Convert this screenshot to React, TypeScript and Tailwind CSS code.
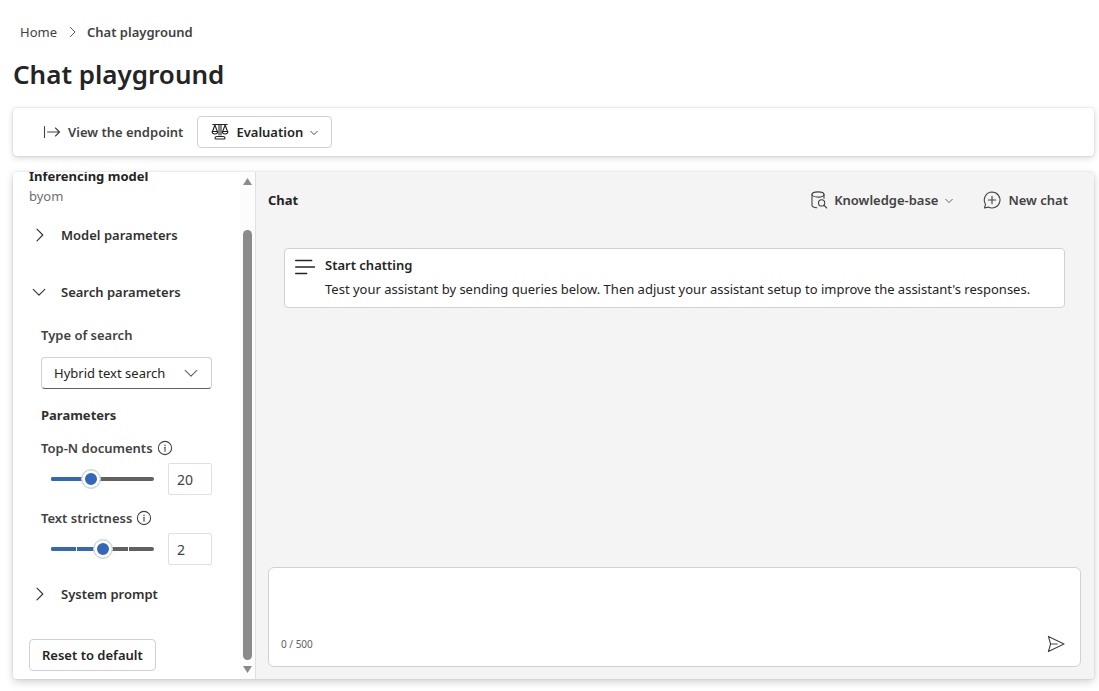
import React, { useState } from 'react';

type IconProps = { className?: string };

const svgProps = {
  viewBox: '0 0 20 20',
  fill: 'none',
  stroke: 'currentColor',
  strokeWidth: 1.1,
  strokeLinecap: 'round' as const,
  strokeLinejoin: 'round' as const,
  'aria-hidden': true,
};

const ChevronRight = ({ className = 'size-5' }: IconProps) => (
  <svg {...svgProps} className={className}>
    <path d="M8 4.2 13.8 10 8 15.8" />
  </svg>
);

const ChevronDown = ({ className = 'size-5' }: IconProps) => (
  <svg {...svgProps} className={className}>
    <path d="M4.2 7.4 10 13.2l5.8-5.8" />
  </svg>
);

const SmallChevronDown = () => (
  <svg {...svgProps} viewBox="0 0 10 10" strokeWidth="0.8" className="size-2.5">
    <path d="M1.7 4.3 5 7.6l3.3-3.3" />
  </svg>
);

const EndpointIcon = () => (
  <svg {...svgProps} className="size-5">
    <path d="M2.5 4.5v11M5.5 10h12M13.5 6l4 4-4 4" />
  </svg>
);

const ScaleIcon = () => (
  <svg {...svgProps} className="size-5" strokeWidth="1.1">
    <path d="M2.8 2.5h14.4M9 2.5V13M11 2.5V13M4.9 3 2.6 9.3M4.9 3l2.3 6.3M15.1 3l-2.3 6.3M15.1 3l2.3 6.3" />
    <path d="M2.1 9.5h5.6c0 1.5-1.2 2.5-2.8 2.5s-2.8-1-2.8-2.5ZM12.3 9.5h5.6c0 1.5-1.2 2.5-2.8 2.5s-2.8-1-2.8-2.5Z" />
    <path d="M7 14.5h6c1.2 0 2 .7 2 1.5s-.4 1-1 1H6c-.6 0-1-.2-1-1s.8-1.5 2-1.5Z" />
  </svg>
);

const DatabaseSearchIcon = () => (
  <svg {...svgProps} className="size-5">
    <ellipse cx="10" cy="4.5" rx="6" ry="2.6" />
    <path d="M4 4.5v10.8c0 1.3 2 2.3 4.8 2.4M16 4.5v3.7" />
    <circle cx="13.6" cy="12.9" r="3.1" />
    <path d="m15.9 15.2 2.8 2.8" />
  </svg>
);

const NewChatIcon = () => (
  <svg {...svgProps} className="size-5">
    <path d="M10 2a8 8 0 1 1-3.7 15.1l-3.7.9.9-3.8A8 8 0 0 1 10 2Z" />
    <path d="M10 6.3v7.4M6.3 10h7.4" />
  </svg>
);

const InfoIcon = () => (
  <svg {...svgProps} className="size-4">
    <circle cx="10" cy="10" r="8.3" strokeWidth="1.3" />
    <path d="M10 9v5" strokeWidth="1.4" />
    <circle cx="10" cy="6.5" r="0.9" fill="currentColor" stroke="none" />
  </svg>
);

const LinesIcon = () => (
  <svg {...svgProps} className="size-6 shrink-0" viewBox="0 0 24 24" strokeWidth="1.4">
    <path d="M2.7 5.5h16M2.7 12h18.8M2.7 18.5h11" />
  </svg>
);

const SendIcon = () => (
  <svg {...svgProps} className="size-5">
    <path d="M2.4 2.4 18 10 2.4 17.6 4.6 10 2.4 2.4ZM4.6 10h6.6" />
  </svg>
);

interface SectionButtonProps {
  label: string;
  open?: boolean;
  className?: string;
}

const SectionButton: React.FC<SectionButtonProps> = ({ label, open = false, className = '' }) => (
  <button type="button" aria-expanded={open} className={`flex h-11 w-full items-center gap-3 text-left font-semibold text-[#323130] ${className}`}>
    {open ? <ChevronDown /> : <ChevronRight />}
    {label}
  </button>
);

interface ParamSliderProps {
  id: string;
  label: string;
  min: number;
  max: number;
  initial: number;
  ticks?: boolean;
}

const ParamSlider: React.FC<ParamSliderProps> = ({ id, label, min, max, initial, ticks }) => {
  const [value, setValue] = useState(initial);
  const percent = ((value - min) / (max - min)) * 100;

  return (
    <div className="mt-[13px]">
      <div className="flex h-5 items-center gap-1 font-semibold text-[#424242]">
        <label htmlFor={id}>{label}</label>
        <InfoIcon />
      </div>
      <div className="mt-[5px] flex items-center gap-1">
        <div className="grid flex-1 items-center">
          <div className="col-start-1 row-start-1 mx-2.5 grid h-1 overflow-hidden rounded-full bg-[#616161]">
            <div className="col-start-1 row-start-1 h-1 bg-[#3267b9]" style={{ width: `${percent}%` }} />
            {ticks && (
              <div className="col-start-1 row-start-1 flex h-1 justify-around">
                <span className="w-px bg-white" />
                <span className="w-px bg-white" />
              </div>
            )}
          </div>
          <input
            id={id}
            type="range"
            min={min}
            max={max}
            value={value}
            onChange={(e) => setValue(Number(e.target.value))}
            className="z-10 col-start-1 row-start-1 m-0 h-5 w-full min-w-0 appearance-none bg-transparent [&::-webkit-slider-thumb]:size-5 [&::-webkit-slider-thumb]:appearance-none [&::-webkit-slider-thumb]:rounded-full [&::-webkit-slider-thumb]:border [&::-webkit-slider-thumb]:border-[#d1d1d1] [&::-webkit-slider-thumb]:bg-[#3267b9] [&::-webkit-slider-thumb]:bg-clip-padding [&::-webkit-slider-thumb]:shadow-[inset_0_0_0_3px_white]"
          />
        </div>
        <input
          type="text"
          aria-label={`${label} value`}
          value={value}
          onChange={(e) => setValue(Number(e.target.value) || min)}
          className="h-8 w-11 rounded-xs border border-[#e0e0e0] bg-white px-2 text-sm text-[#424242]"
        />
      </div>
    </div>
  );
};

const Sidebar = () => (
  <aside className="flex w-[243px] shrink-0 border-r border-[#e0e0e0] bg-white">
    <div className="flex-1 overflow-hidden pb-2 pl-4">
      <h2 className="-mt-1.5 font-bold text-[#242424]">Inferencing model</h2>
      <p className="text-[#707070]">byom</p>

      <SectionButton label="Model parameters" className="mt-[7px]" />
      <SectionButton label="Search parameters" open className="mt-[13px]" />

      <div className="mt-[11px] mr-7 ml-3">
        <label htmlFor="search-type" className="block font-semibold text-[#424242]">Type of search</label>
        <div className="mt-3 grid items-center">
          <select id="search-type" className="col-start-1 row-start-1 h-8 w-full appearance-none rounded border border-[#d1d1d1] border-b-[#616161] bg-white px-3 text-[#242424]">
            <option>Hybrid text search</option>
            <option>Text search</option>
            <option>Vector search</option>
          </select>
          <ChevronDown className="pointer-events-none col-start-1 row-start-1 mr-[11px] size-5 justify-self-end text-[#616161]" />
        </div>

        <h3 className="mt-4 font-bold text-[#323130]">Parameters</h3>
        <ParamSlider id="top-n" label="Top-N documents" min={1} max={50} initial={20} />
        <ParamSlider id="strictness" label="Text strictness" min={1} max={3} initial={2} ticks />
      </div>

      <SectionButton label="System prompt" className="mt-[7px]" />
      <button type="button" className="mt-[23px] block h-8 rounded border border-[#d1d1d1] bg-white px-3 font-semibold text-[#242424]">
        Reset to default
      </button>
    </div>

    {/* Scrollbar */}
    <div className="flex w-[15px] flex-col items-center bg-[#fcfcfc] py-1.5 text-[#8b8b8b]">
      <svg viewBox="0 0 9 7" className="h-[7px] w-[9px]" aria-hidden="true"><path d="M4.5 0 9 7H0Z" fill="currentColor" /></svg>
      <div className="mt-[45px] mb-1.5 w-[9px] flex-1 rounded-full bg-[#8b8b8b]" />
      <svg viewBox="0 0 9 7" className="h-[7px] w-[9px]" aria-hidden="true"><path d="M0 0h9L4.5 7Z" fill="currentColor" /></svg>
    </div>
  </aside>
);

const ChatPanel = () => {
  const [message, setMessage] = useState('');

  return (
    <section className="flex min-w-0 flex-1 flex-col bg-[#f4f4f4] py-3 pr-[13px] pl-3">
      <header className="flex h-8 items-center justify-between pr-[13px]">
        <h2 className="font-bold text-[#242424]">Chat</h2>
        <div className="flex items-center gap-7 font-semibold text-[#424242]">
          <button type="button" className="flex items-center gap-1.5">
            <DatabaseSearchIcon />
            <span>Knowledge-base</span>
            <SmallChevronDown />
          </button>
          <button type="button" className="flex items-center gap-1.5">
            <NewChatIcon />
            New chat
          </button>
        </div>
      </header>

      <div className="mx-4 mt-8 flex gap-2 rounded border border-[#d1d1d1] bg-white px-2 py-1.5 text-[#242424]">
        <LinesIcon />
        <div>
          <h3 className="font-semibold">Start chatting</h3>
          <p className="mt-1 pb-0.5">
            Test your assistant by sending queries below. Then adjust your assistant setup to improve the assistant's responses.
          </p>
        </div>
      </div>

      <form className="mt-auto rounded-md border border-[#d1d1d1] bg-white px-3 pt-2.5 pb-3" onSubmit={(e) => e.preventDefault()}>
        <textarea
          aria-label="Message"
          maxLength={500}
          value={message}
          onChange={(e) => setMessage(e.target.value)}
          className="block h-14 w-full resize-none bg-transparent outline-none"
        />
        <div className="flex items-center justify-between pr-0.5">
          <span className="text-[10px] text-[#616161]">{message.length} / 500</span>
          <button type="submit" aria-label="Send" className="text-[#424242]">
            <SendIcon />
          </button>
        </div>
      </form>
    </section>
  );
};

const App: React.FC = () => {
  return (
    <div className="flex min-h-screen flex-col bg-white pt-[22px] pr-[5px] pb-3 pl-[13px] font-['Noto_Sans','Open_Sans',sans-serif] text-[13px] leading-5 text-[#242424]">
      <nav aria-label="Breadcrumb" className="flex h-5 items-center gap-[7px] pl-[7px] text-[#424242]">
        <a href="#home">Home</a>
        <ChevronRight className="size-4" />
        <a href="#playground" aria-current="page" className="font-semibold">Chat playground</a>
      </nav>

      <h1 className="mt-3.5 text-[26px] leading-9 font-semibold">Chat playground</h1>

      <div className="mt-4 flex h-12 items-center gap-3.5 rounded bg-white pl-[29px] font-semibold shadow-[0_0_2px_rgba(0,0,0,0.16),0_2px_6px_rgba(0,0,0,0.16)]">
        <button type="button" className="flex items-center gap-1.5 text-[#424242]">
          <EndpointIcon />
          View the endpoint
        </button>
        <button type="button" className="flex h-8 items-center gap-1.5 rounded border border-[#d1d1d1] bg-white px-3">
          <ScaleIcon />
          <span>Evaluation</span>
          <SmallChevronDown />
        </button>
      </div>

      <main className="mt-4 flex flex-1 overflow-hidden rounded shadow-[0_0_2px_rgba(0,0,0,0.16),0_3px_8px_rgba(0,0,0,0.18)]">
        <Sidebar />
        <ChatPanel />
      </main>
    </div>
  );
};

export default App;
